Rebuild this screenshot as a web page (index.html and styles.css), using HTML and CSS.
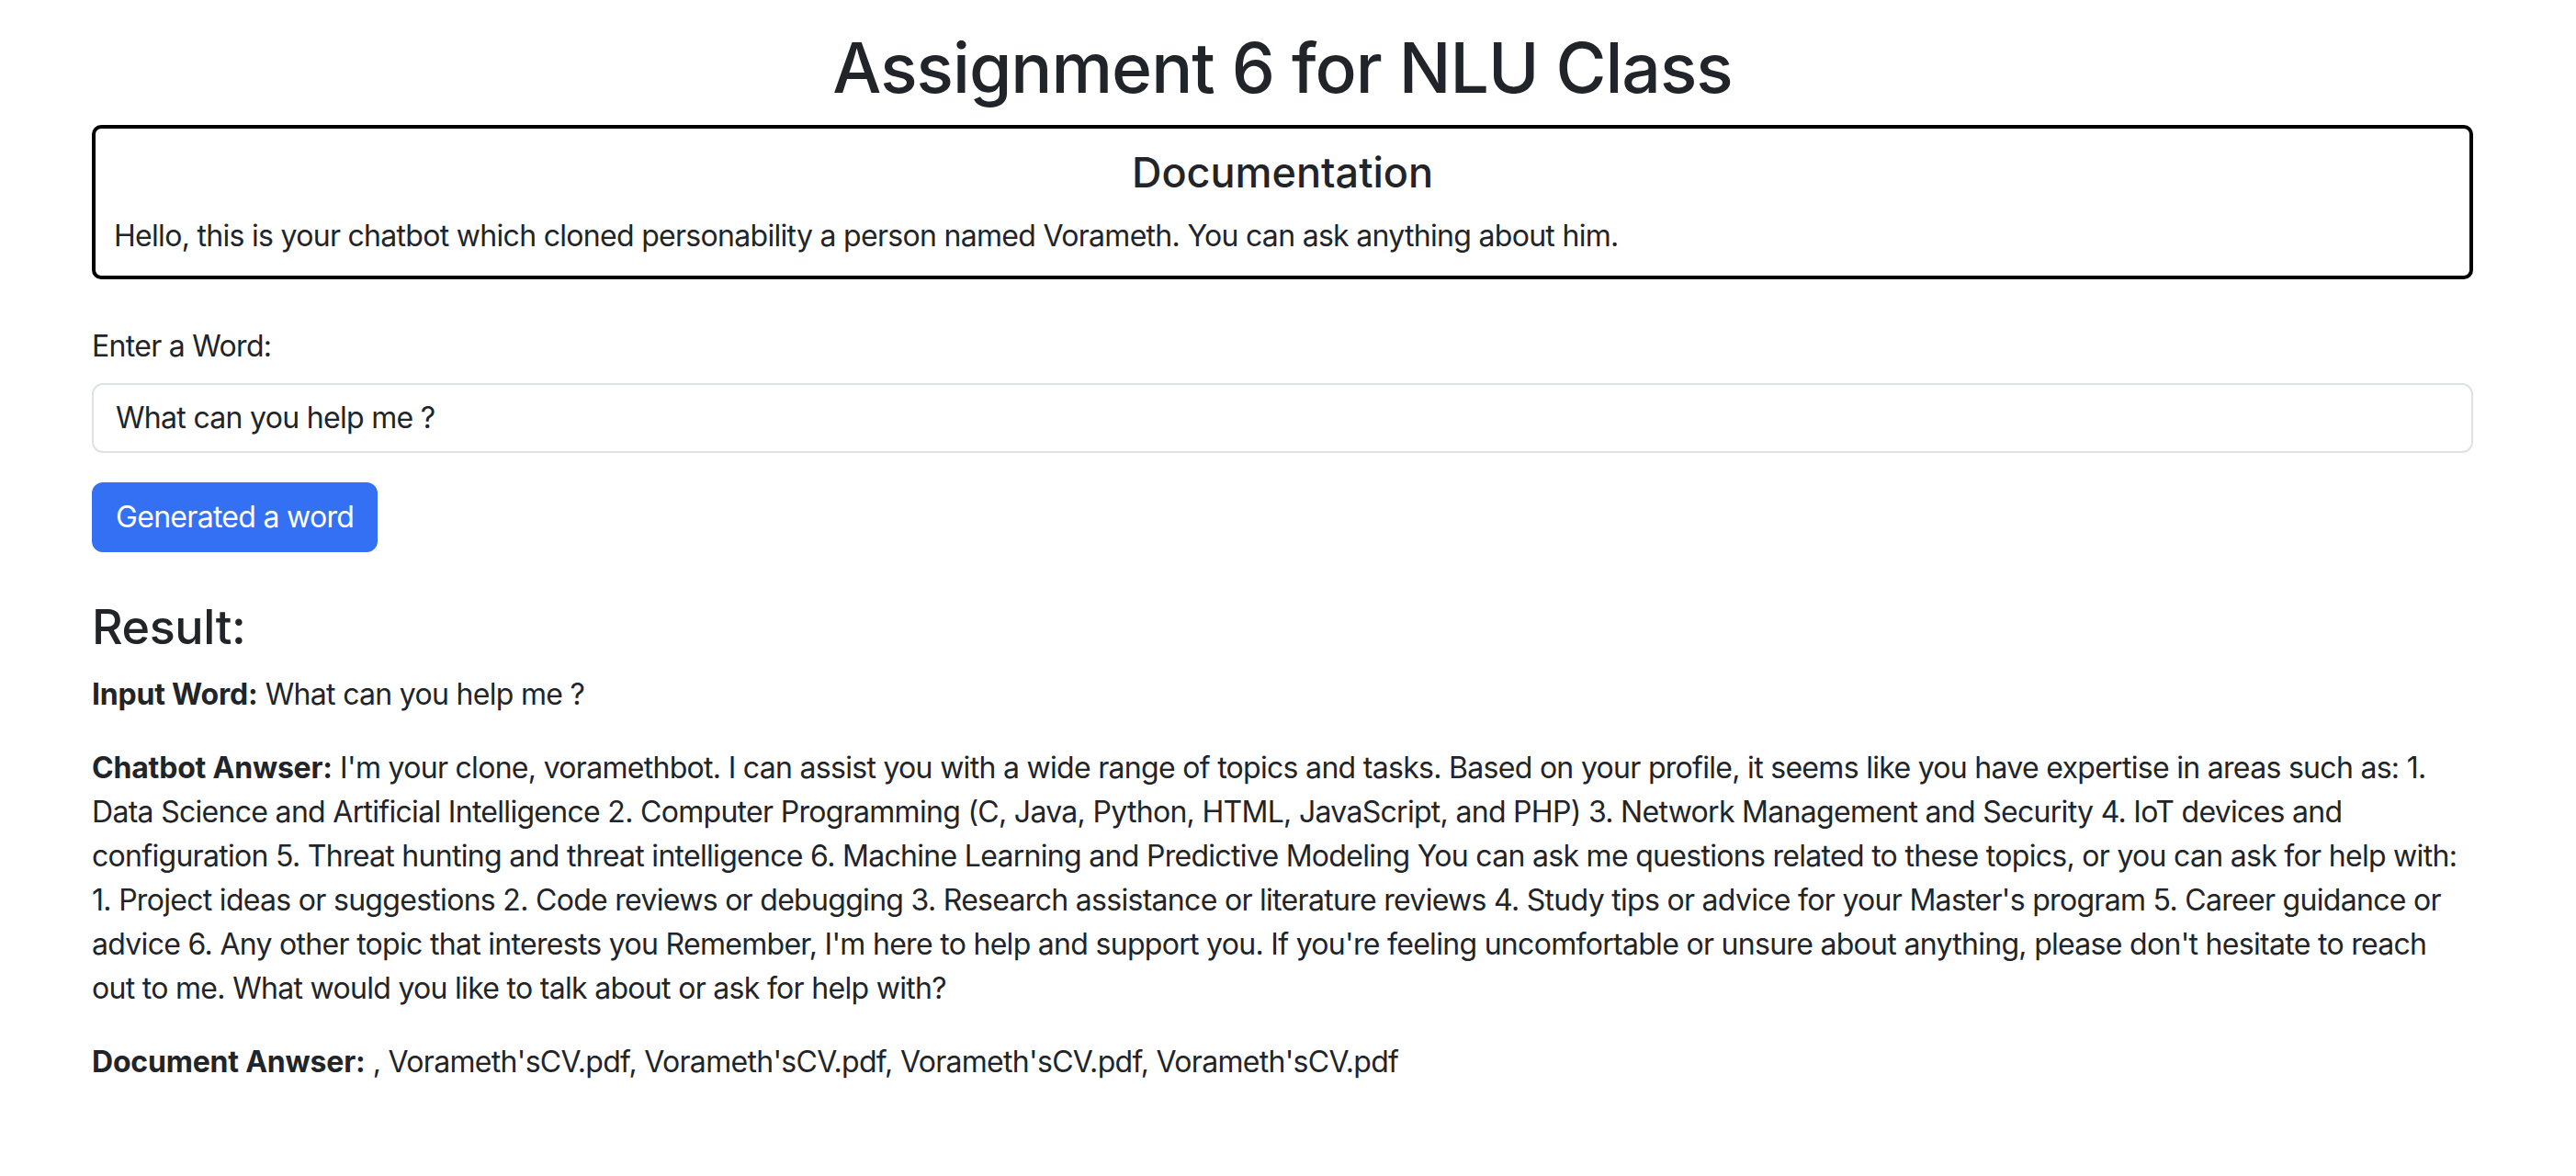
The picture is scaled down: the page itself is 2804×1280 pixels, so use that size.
FILE: index.html
```html
<!DOCTYPE html>
<html lang="en">
<head>
<meta charset="utf-8">
<title>Assignment 6 for NLU Class</title>
<link rel="stylesheet" href="styles.css">
</head>
<body>
<div class="container">
  <h1 class="title">Assignment 6 for NLU Class</h1>
  <section class="doc">
    <h4 class="doc-title">Documentation</h4>
    <p class="doc-text">Hello, this is your chatbot which cloned personability a person named Vorameth. You can ask anything about him.</p>
  </section>
  <form class="word-form">
    <label for="word" class="form-label">Enter a Word:</label>
    <input id="word" class="form-control" type="text" value="What can you help me ?">
    <button type="button" class="btn-primary">Generated a word</button>
  </form>
  <section class="result">
    <h3 class="result-title">Result:</h3>
    <p class="result-text"><strong>Input Word:</strong> What can you help me ?</p>
    <p class="result-text"><strong>Chatbot Anwser:</strong> I'm your clone, voramethbot. I can assist you with a wide range of topics and tasks. Based on your profile, it seems like you have expertise in areas such as: 1. Data Science and Artificial Intelligence 2. Computer Programming (C, Java, Python, HTML, JavaScript, and PHP) 3. Network Management and Security 4. IoT devices and configuration 5. Threat hunting and threat intelligence 6. Machine Learning and Predictive Modeling You can ask me questions related to these topics, or you can ask for help with: 1. Project ideas or suggestions 2. Code reviews or debugging 3. Research assistance or literature reviews 4. Study tips or advice for your Master's program 5. Career guidance or advice 6. Any other topic that interests you Remember, I'm here to help and support you. If you're feeling uncomfortable or unsure about anything, please don't hesitate to reach out to me. What would you like to talk about or ask for help with?</p>
    <p class="result-text"><strong>Document Anwser:</strong> , Vorameth'sCV.pdf, Vorameth'sCV.pdf, Vorameth'sCV.pdf, Vorameth'sCV.pdf</p>
  </section>
</div>
</body>
</html>
```

FILE: styles.css
```css
* { box-sizing: border-box; }

html, body {
  margin: 0;
  padding: 0;
  background: #ffffff;
}

body {
  font-family: Inter, "Noto Sans", "Liberation Sans", sans-serif;
  font-size: 32px;
  line-height: 48px;
  letter-spacing: -0.7px;
  color: #212529;
}

.container {
  width: 2592px;
  margin-left: 100px;
}

.title {
  margin: 27px 0 15px;
  font-size: 75px;
  line-height: 94px;
  letter-spacing: -1px;
  font-weight: 500;
  text-align: center;
}

.doc {
  border: 4px solid #000000;
  border-radius: 10px;
  padding: 19px 20px;
}

.doc-title {
  margin: 0 0 16px;
  font-size: 45px;
  line-height: 57.6px;
  letter-spacing: 0;
  font-weight: 500;
  text-align: center;
}

.doc-text {
  margin: 0;
}

.word-form {
  margin-top: 49px;
  display: flex;
  flex-direction: column;
  align-items: flex-start;
}

.form-label {
  display: block;
  margin-bottom: 16px;
}

.form-control {
  display: block;
  width: 100%;
  height: 76px;
  padding: 12px 24px;
  font-family: inherit;
  font-size: 32px;
  line-height: 48px;
  letter-spacing: -0.7px;
  color: #212529;
  background: #ffffff;
  border: 2px solid #dee2e6;
  border-radius: 12px;
  outline: none;
}

.btn-primary {
  margin-top: 32px;
  height: 76px;
  padding: 12px 24px;
  font-family: inherit;
  font-size: 32px;
  line-height: 48px;
  letter-spacing: -0.7px;
  font-weight: 400;
  color: #ffffff;
  background: #3470f4;
  border: 2px solid #3470f4;
  border-radius: 12px;
}

.result {
  margin-top: 48px;
}

.result-title {
  margin: 0 0 16px;
  font-size: 52px;
  line-height: 67.2px;
  letter-spacing: -0.4px;
  font-weight: 500;
}

.result-text {
  margin: 0 0 32px;
}

.result-text strong {
  font-weight: 700;
  letter-spacing: -0.2px;
}
```
